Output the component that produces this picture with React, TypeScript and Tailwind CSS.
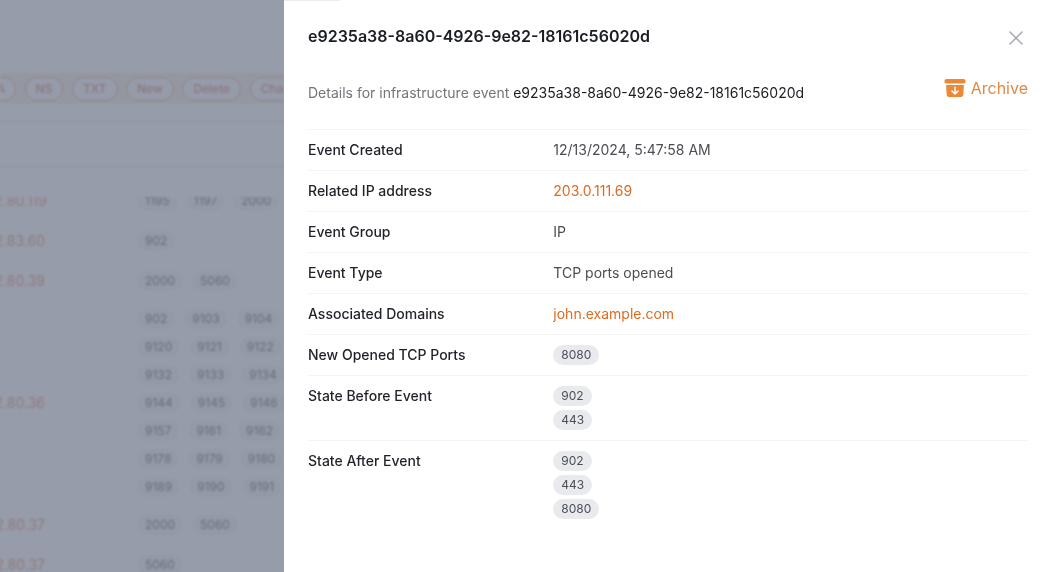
import React from 'react';
import { X } from 'lucide-react';

const FONT = "font-['Inter','Noto_Sans',sans-serif]";

const filters = ['AAAA', 'NS', 'TXT', 'New', 'Delete', 'Change'];

const bgRows: { ip: string; h: string; ports: string[][] }[] = [
  { ip: '2.83.60', h: 'h-10', ports: [['902']] },
  { ip: '2.80.39', h: 'h-10', ports: [['2000', '5060']] },
  {
    ip: '2.80.36',
    h: 'h-[204px]',
    ports: [
      ['902', '9103', '9104'],
      ['9120', '9121', '9122'],
      ['9132', '9133', '9134'],
      ['9144', '9145', '9146'],
      ['9157', '9161', '9162'],
      ['9178', '9179', '9180'],
      ['9189', '9190', '9191'],
    ],
  },
  { ip: '2.80.37', h: 'h-10', ports: [['2000', '5060']] },
  { ip: '2.80.37', h: 'h-10', ports: [['5060']] },
];

const Pill = ({ children }: { children: React.ReactNode }) => (
  <span className="flex h-5 w-fit items-center rounded-full bg-[#e9eaed] px-2 text-xs text-[#4b4f56]">
    {children}
  </span>
);

const Row = ({ label, children }: { label: string; children: React.ReactNode }) => (
  <div className="grid grid-cols-3 gap-4 border-b border-[#f3f4f6] py-2.5 last:border-b-0">
    <dt className="text-sm font-medium leading-5 text-[#1f2228]">{label}</dt>
    <dd className="col-span-2 text-sm leading-5 text-[#4a4d52]">{children}</dd>
  </div>
);

const ArchiveIcon = () => (
  <svg viewBox="0 0 24 24" fill="currentColor" className="h-6 w-6">
    <path d="M3.375 3C2.339 3 1.5 3.84 1.5 4.875v.75c0 1.036.84 1.875 1.875 1.875h17.25c1.035 0 1.875-.84 1.875-1.875v-.75C22.5 3.839 21.66 3 20.625 3H3.375Z" />
    <path
      fillRule="evenodd"
      clipRule="evenodd"
      d="m3.087 9 .54 9.176A3 3 0 0 0 6.62 21h10.757a3 3 0 0 0 2.995-2.824L20.913 9H3.087ZM12 10.5a.75.75 0 0 1 .75.75v4.94l1.72-1.72a.75.75 0 1 1 1.06 1.06l-3 3a.75.75 0 0 1-1.06 0l-3-3a.75.75 0 1 1 1.06-1.06l1.72 1.72v-4.94a.75.75 0 0 1 .75-.75Z"
    />
  </svg>
);

const PortChip = ({ children }: { children: React.ReactNode }) => (
  <span className="-mx-2 rounded-full bg-[#f5f5f7] px-2 leading-5">{children}</span>
);

const Backdrop = () => (
  <div className="relative w-[284px] shrink-0 overflow-hidden bg-white">
    <div className="blur-[0.8px]">
      <div className="h-[73px]" />
      <div className="flex h-[31px] items-center overflow-hidden bg-[#f6eee2]">
        <div className="-ml-[40.5px] flex items-center gap-[8.5px]">
          {filters.map((f) => (
            <span
              key={f}
              className="flex h-6 shrink-0 items-center rounded-full border border-[#e0a68e] bg-[#fbfcff] px-2.5 text-xs font-medium text-[#d08a6e]"
            >
              {f}
            </span>
          ))}
        </div>
      </div>
      <div className="h-[17px]" />
      <div className="h-[46px] border-y border-[#d8dade]" />
      <div className="h-[30px]" />
      <div className="h-[24px] overflow-hidden">
        <div className="-mt-[16px] flex h-10 items-center">
          <div className="flex w-[145px] shrink-0 justify-end pr-[98px] text-sm text-[#d98a6a]">
            <span className="whitespace-nowrap">2.80.119</span>
          </div>
          <div className="flex gap-[24px] text-xs text-[#5b6068]">
            <PortChip>1195</PortChip>
            <PortChip>1197</PortChip>
            <PortChip>2000</PortChip>
          </div>
        </div>
      </div>
      {bgRows.map((row, i) => (
        <div key={i} className={`flex items-center ${row.h}`}>
          <div className="flex w-[145px] shrink-0 justify-end pr-[100px] text-sm text-[#d98a6a]">
            <span className="whitespace-nowrap">{row.ip}</span>
          </div>
          <div className="flex flex-col gap-2">
            {row.ports.map((line, j) => (
              <div key={j} className="flex h-5 items-center gap-[25px] text-xs text-[#5b6068]">
                {line.map((p) => (
                  <PortChip key={p}>{p}</PortChip>
                ))}
              </div>
            ))}
          </div>
        </div>
      ))}
    </div>
    <div className="absolute inset-0 bg-[#6b7286]/70" />
  </div>
);

export default function App() {
  return (
    <div className={`${FONT} flex h-[572px] w-[1052px] overflow-hidden bg-white`}>
      <Backdrop />
      <div className="relative flex-1 px-6 pt-6">
        <div className="absolute left-0 top-0 h-px w-14 bg-[#ececec]" />
        <div className="flex items-start justify-between">
          <h2 className="text-base font-semibold leading-6 text-[#1a1d23]">
            e9235a38-8a60-4926-9e82-18161c56020d
          </h2>
          <X size={24} strokeWidth={1.5} className="mt-0.5 text-[#a6a9b0]" />
        </div>
        <div className="mt-[26px] flex h-[28px] items-center justify-between">
          <p className="pt-1.5 text-sm text-[#72757a]">
            Details for infrastructure event{' '}
            <span className="text-[#1a1d23]">e9235a38-8a60-4926-9e82-18161c56020d</span>
          </p>
          <button className="mb-1 flex items-center gap-1 text-base text-[#ed8936]">
            <ArchiveIcon />
            <span className="text-[#e08a45]">Archive</span>
          </button>
        </div>
        <dl className="mt-[25px] border-t border-[#f3f4f6]">
          <Row label="Event Created">12/13/2024, 5:47:58 AM</Row>
          <Row label="Related IP address">
            <span className="text-[#dd6b20]">203.0.111.69</span>
          </Row>
          <Row label="Event Group">IP</Row>
          <Row label="Event Type">TCP ports opened</Row>
          <Row label="Associated Domains">
            <span className="text-[#dd6b20]">john.example.com</span>
          </Row>
          <Row label="New Opened TCP Ports">
            <Pill>8080</Pill>
          </Row>
          <Row label="State Before Event">
            <div className="flex flex-col items-start gap-1">
              <Pill>902</Pill>
              <Pill>443</Pill>
            </div>
          </Row>
          <Row label="State After Event">
            <div className="flex flex-col items-start gap-1">
              <Pill>902</Pill>
              <Pill>443</Pill>
              <Pill>8080</Pill>
            </div>
          </Row>
        </dl>
      </div>
    </div>
  );
}
